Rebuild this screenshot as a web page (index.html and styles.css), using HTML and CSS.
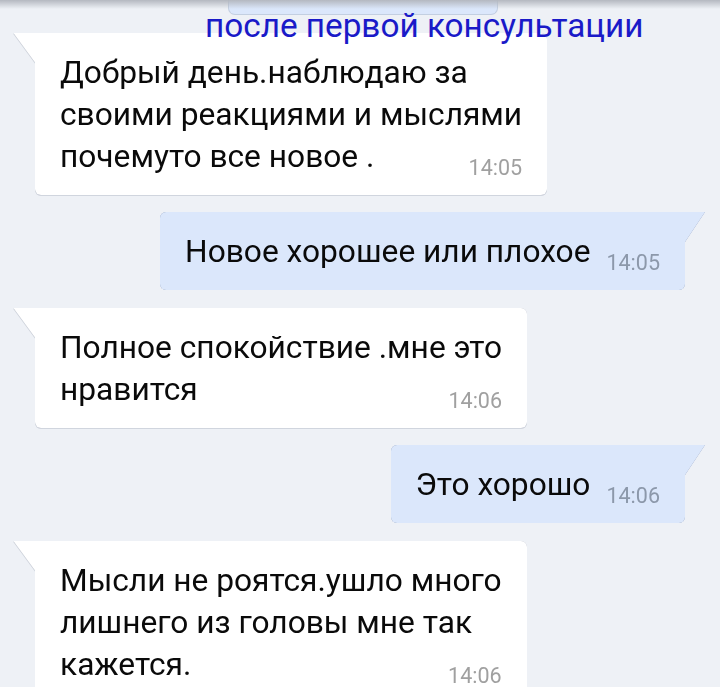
FILE: index.html
```html
<!DOCTYPE html>
<html lang="ru">
<head>
    <meta charset="UTF-8">
    <meta name="viewport" content="width=device-width, initial-scale=1.0">
    <title>Чат</title>
    <link rel="stylesheet" href="styles.css">
</head>
<body>
    <div class="top-shadow"></div>
    <div class="caption">после первой консультации</div>
    <main class="chat">
        <div class="service"></div>

        <div class="msg in">
            Добрый день.наблюдаю за<br>своими реакциями и мыслями<br><span class="time">14:05</span>почемуто все новое .
        </div>

        <div class="msg out">
            <span class="time">14:05</span>Новое хорошее или плохое
        </div>

        <div class="msg in">
            Полное спокойствие .мне это<br><span class="time">14:06</span>нравится
        </div>

        <div class="msg out">
            <span class="time">14:06</span>Это хорошо
        </div>

        <div class="msg in">
            Мысли не роятся.ушло много<br>лишнего из головы мне так<br><span class="time">14:06</span>кажется.
        </div>
    </main>
</body>
</html>
```

FILE: styles.css
```css
body {
    margin: 0;
    height: 687px;
    overflow: hidden;
    background-color: #eef1f6;
    font-family: Roboto, "Liberation Sans", sans-serif;
}
.top-shadow {
    position: absolute;
    left: 0;
    top: 0;
    width: 100%;
    height: 9px;
    background: linear-gradient(#b4b8c0, rgba(238, 241, 246, 0));
    z-index: 3;
}
.caption {
    position: absolute;
    left: 205px;
    top: 8px;
    font-size: 33.3px;
    line-height: 36px;
    color: #1a1ac8;
    z-index: 2;
}
.chat {
    display: flex;
    flex-direction: column;
    gap: 17.5px;
    padding: 0 35px;
}
.service {
    align-self: center;
    width: 270px;
    height: 15px;
    margin-left: 6px;
    background-color: #dbe7fb;
    border: 1px solid #c3cfe1;
    border-top: none;
    border-radius: 0 0 7px 7px;
    box-sizing: border-box;
}
.msg {
    position: relative;
    width: fit-content;
    padding: 19px 25px 17px 25px;
    font-size: 31.7px;
    line-height: 42px;
    color: #0a0a0a;
    border-radius: 6px;
}
.msg::before {
    content: "";
    position: absolute;
    top: 0;
    width: 22px;
    height: 30px;
}
.msg.in {
    align-self: flex-start;
    background-color: #fff;
    border-top-left-radius: 0;
    filter: drop-shadow(0 0 0.6px rgba(120, 130, 150, 0.55)) drop-shadow(0 1px 0.5px rgba(120, 130, 150, 0.25));
}
.msg.in::before {
    left: -22px;
    background-color: #fff;
    clip-path: polygon(0 0, 100% 0, 100% 100%);
}
.msg.out {
    align-self: flex-end;
    background-color: #dbe7fb;
    border-top-right-radius: 0;
    filter: drop-shadow(0 0 0.7px rgba(90, 110, 150, 0.75));
}
.msg.out::before {
    right: -20px;
    width: 20px;
    background-color: #dbe7fb;
    clip-path: polygon(0 0, 100% 0, 0 100%);
}
.time {
    float: right;
    margin: 21px 0 0 16px;
    font-size: 21.5px;
    line-height: 21px;
    color: #a0a0a0;
}
.out .time {
    color: #8c98aa;
}
```
